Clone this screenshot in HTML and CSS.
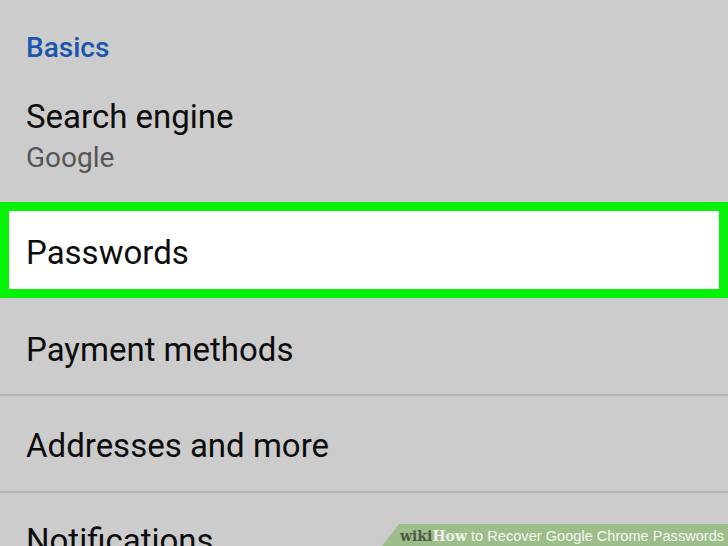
FILE: index.html
```html
<!DOCTYPE html>
<html>
<head>
<meta charset="utf-8">
<link rel="stylesheet" href="styles.css">
</head>
<body>
<div class="screen">
  <div class="section-title">Basics</div>
  <div class="row two-line">
    <div class="title">Search engine</div>
    <div class="subtitle">Google</div>
  </div>
  <div class="row highlight">
    <div class="title">Passwords</div>
  </div>
  <div class="row payment">
    <div class="title">Payment methods</div>
  </div>
  <div class="divider"></div>
  <div class="row addresses">
    <div class="title">Addresses and more</div>
  </div>
  <div class="divider"></div>
  <div class="row notifications">
    <div class="title">Notifications</div>
  </div>
</div>
<div class="watermark">
  <span class="wm-wiki">wiki</span><span class="wm-how">How</span><span class="wm-rest"> to Recover Google Chrome Passwords</span>
</div>
</body>
</html>
```

FILE: styles.css
```css
html, body {
  margin: 0;
  padding: 0;
}
body {
  background: #cccccc;
  font-family: Roboto, "Noto Sans", sans-serif;
  width: 728px;
  height: 546px;
  overflow: hidden;
  position: relative;
}
.screen {
  display: flex;
  flex-direction: column;
}
.section-title {
  box-sizing: border-box;
  height: 82px;
  padding: 31px 0 0 26px;
  font-size: 28px;
  line-height: 34px;
  font-weight: 500;
  color: #1b56ae;
}
.row {
  box-sizing: border-box;
  padding-left: 26px;
}
.title {
  font-size: 33px;
  line-height: 40px;
  color: #0d0d0d;
}
.subtitle {
  font-size: 28px;
  line-height: 40px;
  color: #555555;
  margin-top: 1px;
}
.two-line {
  height: 120px;
  padding-top: 15px;
}
.highlight {
  height: 96px;
  background: #ffffff;
  border: 9px solid #06f206;
  padding: 22px 0 0 17px;
}
.payment {
  height: 96px;
  padding-top: 32px;
}
.addresses {
  height: 95px;
  padding-top: 30px;
}
.notifications {
  padding-top: 28px;
}
.divider {
  height: 2px;
  background: #b2b2b2;
}
.watermark {
  position: absolute;
  right: 0;
  bottom: 0;
  width: 346px;
  height: 22px;
  box-sizing: border-box;
  padding: 3px 0 0 18px;
  background: #9dbd8a;
  clip-path: polygon(17px 0, 100% 0, 100% 100%, 0 100%);
  white-space: nowrap;
  line-height: 17px;
}
.wm-wiki {
  font-family: "DejaVu Serif", "Liberation Serif", serif;
  font-weight: bold;
  color: #4d5a48;
  font-size: 14px;
}
.wm-how {
  font-family: "DejaVu Serif", "Liberation Serif", serif;
  font-weight: bold;
  color: #eef3ea;
  font-size: 14px;
}
.wm-rest {
  font-family: "Liberation Sans", Arial, sans-serif;
  color: #f4f7f2;
  font-size: 14.6px;
}
```
